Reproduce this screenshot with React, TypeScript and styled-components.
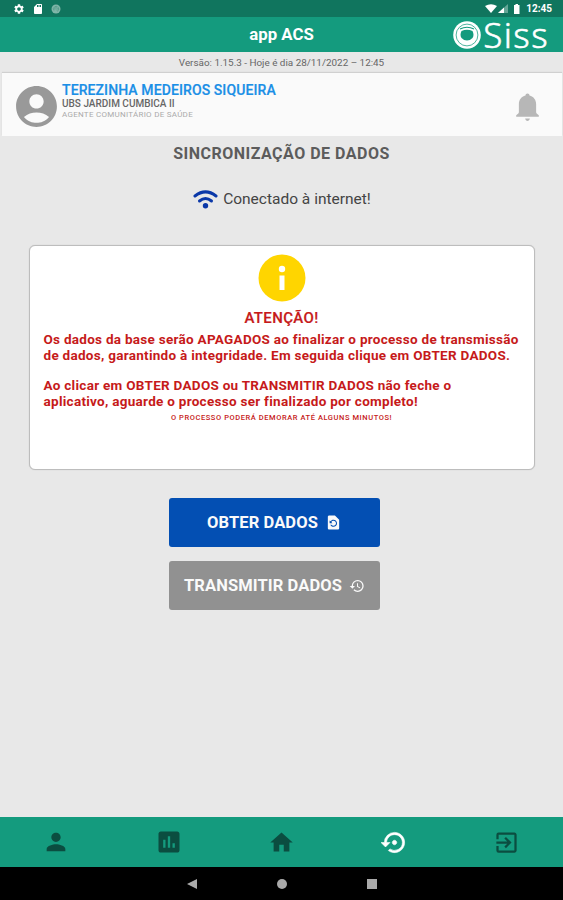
import React from "react";
import styled, { createGlobalStyle } from "styled-components";
import {
  MdAccountCircle,
  MdAssessment,
  MdExitToApp,
  MdHome,
  MdPerson,
  MdRestore,
  MdRestorePage,
  MdSdCard,
  MdSettings,
  MdSettingsBackupRestore,
} from "react-icons/md";

const GlobalStyle = createGlobalStyle`
  * { box-sizing: border-box; }
  body { margin: 0; background: #e8e8e8; font-family: Roboto, "Liberation Sans", sans-serif; }
  svg { display: block; flex: none; }
`;

const Screen = styled.div`
  width: 563px;
  height: 900px;
  display: flex;
  flex-direction: column;
  background: #e8e8e8;
  overflow: hidden;
`;

const StatusBar = styled.div`
  height: 17px;
  flex: none;
  display: flex;
  align-items: center;
  justify-content: space-between;
  padding: 1px 11px 0 13px;
  background: #10755e;
  color: #fff;
`;

const StatusGroup = styled.div<{ $gap: number }>`
  display: flex;
  align-items: center;
  gap: ${(p) => p.$gap}px;
`;

const Clock = styled.span`
  margin-left: 3px;
  font-size: 10px;
  font-weight: 700;
  line-height: 12px;
`;

const Header = styled.header`
  height: 35px;
  flex: none;
  display: grid;
  grid-template-columns: 1fr auto 1fr;
  align-items: center;
  background: #149b7e;
  color: #fff;
`;

const AppTitle = styled.h1`
  grid-column: 2;
  margin: 0;
  padding-bottom: 1px;
  font-size: 16.8px;
  font-weight: 700;
  line-height: 33px;
`;

const Brand = styled.div`
  display: flex;
  align-items: center;
  justify-content: flex-end;
  gap: 2px;
  padding: 1px 14px 0 0;
  height: 35px;
`;

const BrandName = styled.span`
  font-family: "Noto Sans", sans-serif;
  font-size: 35px;
  font-weight: 300;
  line-height: 26px;
  letter-spacing: 1.4px;
  -webkit-text-stroke: 0.5px #fff;
`;

const Version = styled.div`
  height: 21px;
  flex: none;
  text-align: center;
  font-size: 9.9px;
  line-height: 21px;
  color: #666;
`;

const UserCard = styled.section`
  height: 63px;
  flex: none;
  margin: 0 1px 0 2px;
  display: flex;
  align-items: flex-start;
  background: #fafafa;
  box-shadow: 0 -1px 1px rgba(0, 0, 0, 0.1);
  padding: 9px 23px 0 10px;
  color: #999;
`;

const UserText = styled.div`
  flex: 1;
  margin-left: 1px;
`;

const UserName = styled.div`
  font-size: 14px;
  font-weight: 500;
  line-height: 16px;
  letter-spacing: 0.1px;
  color: #1b8fe6;
  white-space: nowrap;
  -webkit-text-stroke: 0.2px #1b8fe6;
`;

const UserUnit = styled.div`
  font-size: 10px;
  line-height: 11px;
  color: #666;
  font-weight: 500;
`;

const UserRole = styled.div`
  font-size: 8px;
  line-height: 11px;
  letter-spacing: 0.27px;
  color: #aaa;
`;

const BellSlot = styled.div`
  margin-top: 11px;
`;

const Main = styled.main`
  flex: 1;
  display: flex;
  flex-direction: column;
  align-items: center;
`;

const PageTitle = styled.h2`
  margin: 8px 0 0;
  font-size: 16px;
  font-weight: 700;
  line-height: 20px;
  letter-spacing: 0.5px;
  color: #5c5c5c;
`;

const Connection = styled.div`
  margin-top: 25px;
  height: 20px;
  display: flex;
  align-items: center;
  gap: 5px;
  padding-left: 1px;
  font-size: 15.5px;
  color: #444;
`;

const Notice = styled.section`
  width: 506px;
  height: 225px;
  margin-top: 36px;
  display: flex;
  flex-direction: column;
  align-items: center;
  border: 1px solid #bdbdbd;
  border-radius: 6px;
  background: #fff;
  color: #c61a1a;
  padding: 8px 14px 0;
  box-shadow: 0 0 1px #bbb;
`;

const NoticeTitle = styled.h3`
  margin: 7px 0 4px;
  font-size: 15px;
  font-weight: 500;
  line-height: 18px;
  letter-spacing: 0.35px;
  -webkit-text-stroke: 0.2px #c61a1a;
`;

const NoticeText = styled.p`
  align-self: stretch;
  margin: 0 0 14px;
  font-size: 13.5px;
  font-weight: 700;
  line-height: 16px;
  letter-spacing: 0.28px;
  white-space: nowrap;
`;

const NoticeFoot = styled.div`
  margin-top: -12px;
  font-size: 7.5px;
  font-weight: 500;
  line-height: 14px;
  letter-spacing: 0.57px;
`;

const Actions = styled.div`
  display: flex;
  flex-direction: column;
  gap: 14px;
  margin-top: 28px;
  padding-right: 14px;
`;

const ActionButton = styled.button<{ $tone: string }>`
  width: 211px;
  height: 49px;
  display: flex;
  align-items: center;
  justify-content: center;
  gap: 7px;
  border: 0;
  border-radius: 3px;
  padding: 0;
  background: ${(p) => p.$tone};
  color: #fafafa;
  font: 700 16.5px/20px Roboto, sans-serif;
  letter-spacing: 0.1px;
`;

const TabBar = styled.nav`
  height: 50px;
  flex: none;
  display: grid;
  grid-template-columns: repeat(5, 1fr);
  place-items: center;
  background: #149b7e;
`;

const Tab = styled.a<{ $active?: boolean }>`
  color: ${(p) => (p.$active ? "#fff" : "#0b4d40")};

  path:not([fill="none"]) {
    stroke-width: ${(p) => (p.$active ? 0.5 : 0)};
  }

  path[fill="none"] {
    stroke: none;
  }
`;

const SystemBar = styled.div`
  height: 33px;
  flex: none;
  display: flex;
  align-items: center;
  justify-content: center;
  gap: 80px;
  background: #000;
`;

const Sphere = () => (
  <svg width="10" height="10" viewBox="0 0 10 10">
    <circle cx="5" cy="5" r="4.5" fill="#7fb5a8" />
    <path d="M3 6.5A2.6 2.6 0 1 1 6 7.4M4 5.5A1.2 1.2 0 1 1 5.5 6" fill="none" stroke="#4f9785" strokeWidth=".8" />
  </svg>
);

const Signal = () => (
  <svg width="35" height="12" viewBox="0 0 35 12">
    <path d="M0 3Q6-.5 12 3L6 10Z" fill="#fff" />
    <path d="M23 1V10H13Z" fill="#63a696" />
    <path d="M19 4.6V10H13Z" fill="#fff" />
    <path d="M29 2h1.5V1h2.5v1H34.5v9H29Z" fill="#fff" />
  </svg>
);

const BrandMark = () => (
  <svg width="28" height="28" viewBox="0 0 28 28">
    <circle cx="14" cy="14" r="13.8" fill="#fff" />
    <circle cx="14" cy="14" r="10.9" fill="none" stroke="#149b7e" strokeWidth="1" strokeOpacity=".75" />
    <path d="M7 8Q14 4.5 21 8" fill="none" stroke="#149b7e" strokeWidth="1.1" />
    <path d="M8.5 10Q14 7.500 19.500 10Q21.500 14 19.500 17Q17 19.500 14 19.500T8.500 17Q6.500 14 8.500 10Z" fill="#149b7e" />
  </svg>
);

const Bell = () => (
  <svg width="23" height="29" viewBox="0 0 24 29" fill="#b7b7b7">
    <path d="M12 0c1.3 0 2.1.9 2.1 2.1C18.500 3.200 21 6.800 21 11v8.500c0 1.500 2.300 2.300 2.800 3.200v1.500H.2v-1.500c.5-.9 2.800-1.700 2.800-3.200V11C3 6.800 5.500 3.200 9.900 2.100 9.900.9 10.700 0 12 0Z" />
    <path d="M9.500 26h5c-.4 1.700-1.200 2.500-2.500 2.500S9.900 27.700 9.500 26Z" />
  </svg>
);

const Info = () => (
  <svg width="48" height="48" viewBox="0 0 48 48">
    <circle cx="24" cy="24" r="23.5" fill="#ffd500" />
    <path d="M21.500 21.500h5V36h-5Z" fill="#fff" />
    <circle cx="24" cy="15" r="3.2" fill="#fff" />
  </svg>
);

const Wifi = () => (
  <svg width="25" height="19" viewBox="0 0 25 19" fill="none" stroke="#0b38a8" strokeWidth="3" strokeLinecap="round">
    <path d="M2 6Q12.5-2.200 23 6" />
    <path d="M6.500 11Q12.5 6 18.500 11" />
    <circle cx="12.5" cy="15.8" r="1.2" fill="#0b38a8" />
  </svg>
);

const tabs = [
  { id: "person", Icon: MdPerson, size: 28 },
  { id: "stats", Icon: MdAssessment, size: 28 },
  { id: "home", Icon: MdHome, size: 27 },
  { id: "sync", Icon: MdSettingsBackupRestore, size: 27, active: true },
  { id: "exit", Icon: MdExitToApp, size: 27 },
];

export default function App() {
  return (
    <Screen>
      <GlobalStyle />
      <StatusBar>
        <StatusGroup $gap={7}>
          <MdSettings size={12} />
          <MdSdCard size={12} />
          <Sphere />
        </StatusGroup>
        <StatusGroup $gap={3}>
          <Signal />
          <Clock>12:45</Clock>
        </StatusGroup>
      </StatusBar>
      <Header>
        <AppTitle>app ACS</AppTitle>
        <Brand>
          <BrandMark />
          <BrandName>Siss</BrandName>
        </Brand>
      </Header>
      <Version>Versão: 1.15.3 - Hoje é dia 28/11/2022 – 12:45</Version>
      <UserCard>
        <MdAccountCircle size={49} />
        <UserText>
          <UserName>TEREZINHA MEDEIROS SIQUEIRA</UserName>
          <UserUnit>UBS JARDIM CUMBICA II</UserUnit>
          <UserRole>AGENTE COMUNITÁRIO DE SAÚDE</UserRole>
        </UserText>
        <BellSlot>
          <Bell />
        </BellSlot>
      </UserCard>
      <Main>
        <PageTitle>SINCRONIZAÇÃO DE DADOS</PageTitle>
        <Connection>
          <Wifi />
          Conectado à internet!
        </Connection>
        <Notice>
          <Info />
          <NoticeTitle>ATENÇÃO!</NoticeTitle>
          <NoticeText>
            Os dados da base serão APAGADOS ao finalizar o processo de transmissão
            <br />
            de dados, garantindo à integridade. Em seguida clique em OBTER DADOS.
          </NoticeText>
          <NoticeText>
            Ao clicar em OBTER DADOS ou TRANSMITIR DADOS não feche o
            <br />
            aplicativo, aguarde o processo ser finalizado por completo!
          </NoticeText>
          <NoticeFoot>O PROCESSO PODERÁ DEMORAR ATÉ ALGUNS MINUTOS!</NoticeFoot>
        </Notice>
        <Actions>
          <ActionButton $tone="#034fb3">
            OBTER DADOS
            <MdRestorePage size={17} />
          </ActionButton>
          <ActionButton $tone="#919191">
            TRANSMITIR DADOS
            <MdRestore size={16} />
          </ActionButton>
        </Actions>
      </Main>
      <TabBar>
        {tabs.map(({ id, Icon, size, active }) => (
          <Tab key={id} $active={active}>
            <Icon size={size} />
          </Tab>
        ))}
      </TabBar>
      <SystemBar>
        <svg width="10" height="10" viewBox="0 0 10 10" fill="#aaa"><path d="M0 5L10 0V10Z" /></svg>
        <svg width="10" height="10" viewBox="0 0 10 10" fill="#aaa"><circle cx="5" cy="5" r="5" /></svg>
        <svg width="10" height="10" viewBox="0 0 10 10" fill="#aaa"><path d="M0 0H10V10H0Z" /></svg>
      </SystemBar>
    </Screen>
  );
}
